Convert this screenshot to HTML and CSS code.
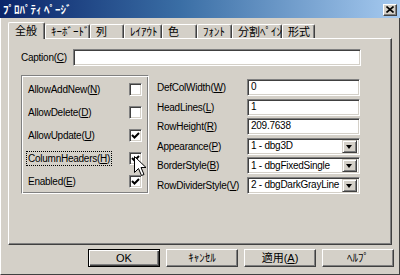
FILE: index.html
```html
<!DOCTYPE html>
<html lang="ja">

<head>
    <meta charset="UTF-8">
    <meta name="viewport" content="width=device-width, initial-scale=1.0">
    <title>プロパティページ</title>
    <link rel="stylesheet" href="styles.css">
</head>

<body>
    <div class="window">
        <div class="titlebar">
            <span class="title">ﾌﾟﾛﾊﾟﾃｨ ﾍﾟｰｼﾞ</span>
            <span class="close">
                <svg width="8" height="7" viewBox="0 0 8 7"><path d="M0.5 0.5 L7.5 6.5 M7.5 0.5 L0.5 6.5" stroke="#000" stroke-width="1.6"/></svg>
            </span>
        </div>

        <div class="tabs">
            <div class="tab active">全般</div>
            <div class="tab w45">ｷｰﾎﾞｰﾄﾞ</div>
            <div class="tab w34">列</div>
            <div class="tab w38">ﾚｲｱｳﾄ</div>
            <div class="tab w35">色</div>
            <div class="tab w35">ﾌｫﾝﾄ</div>
            <div class="tab w50">分割ﾍﾟｲﾝ</div>
            <div class="tab w33">形式</div>
        </div>

        <div class="panel">
            <div class="caption-row">
                <span class="caption-label">Caption(<u>C</u>)</span>
                <div class="textbox caption-box"></div>
            </div>

            <div class="columns">
                <div class="group">
                    <div class="check-row">
                        <span>AllowAddNew(<u>N</u>)</span>
                        <span class="checkbox"></span>
                    </div>
                    <div class="check-row">
                        <span>AllowDelete(<u>D</u>)</span>
                        <span class="checkbox"></span>
                    </div>
                    <div class="check-row">
                        <span>AllowUpdate(<u>U</u>)</span>
                        <span class="checkbox checked"><svg width="9" height="9" viewBox="0 0 9 9"><path d="M1 4 L3.5 6.5 L8 2" fill="none" stroke="#000" stroke-width="2"/></svg></span>
                    </div>
                    <div class="check-row">
                        <span class="focus">ColumnHeaders(<u>H</u>)</span>
                        <span class="checkbox checked"><svg width="9" height="9" viewBox="0 0 9 9"><path d="M1 4 L3.5 6.5 L8 2" fill="none" stroke="#000" stroke-width="2"/></svg></span>
                    </div>
                    <div class="check-row">
                        <span>Enabled(<u>E</u>)</span>
                        <span class="checkbox checked"><svg width="9" height="9" viewBox="0 0 9 9"><path d="M1 4 L3.5 6.5 L8 2" fill="none" stroke="#000" stroke-width="2"/></svg></span>
                    </div>
                </div>

                <div class="fields">
                    <div class="field">
                        <span class="field-label">DefColWidth(<u>W</u>)</span>
                        <div class="textbox">0</div>
                    </div>
                    <div class="field">
                        <span class="field-label">HeadLines(<u>L</u>)</span>
                        <div class="textbox">1</div>
                    </div>
                    <div class="field">
                        <span class="field-label">RowHeight(<u>R</u>)</span>
                        <div class="textbox">209.7638</div>
                    </div>
                    <div class="field">
                        <span class="field-label">Appearance(<u>P</u>)</span>
                        <div class="textbox select"><span>1 - dbg3D</span><span class="drop"></span></div>
                    </div>
                    <div class="field">
                        <span class="field-label">BorderStyle(<u>B</u>)</span>
                        <div class="textbox select"><span>1 - dbgFixedSingle</span><span class="drop"></span></div>
                    </div>
                    <div class="field">
                        <span class="field-label">RowDividerStyle(<u>V</u>)</span>
                        <div class="textbox select"><span>2 - dbgDarkGrayLine</span><span class="drop"></span></div>
                    </div>
                </div>
            </div>
        </div>

        <div class="buttons">
            <div class="btn default"><span>OK</span></div>
            <div class="btn"><span>ｷｬﾝｾﾙ</span></div>
            <div class="btn"><span>適用(<u>A</u>)</span></div>
            <div class="btn"><span>ﾍﾙﾌﾟ</span></div>
        </div>

        <svg class="cursor" width="13" height="21" viewBox="0 0 13 21">
            <path d="M0.5 0.5 L0.5 16.5 L4.5 12.5 L7.5 19.5 L10 18.5 L7 11.5 L12 11.5 Z" fill="#fff" stroke="#000" stroke-width="1"/>
        </svg>
    </div>
</body>

</html>
```

FILE: styles.css
```css
* {
    box-sizing: border-box;
}

body {
    margin: 0px;
    padding: 0px;
    width: 400px;
    height: 275px;
    overflow: hidden;
    font-family: "Liberation Sans", "Noto Sans CJK JP", sans-serif;
    font-size: 10px;
    letter-spacing: -0.25px;
    color: #000;
}

u {
    text-decoration: underline;
    text-underline-offset: 1px;
}

.window {
    position: relative;
    width: 400px;
    height: 275px;
    background-color: #d4d0c8;
    border-left: 1px solid #fff;
    border-right: 1px solid #404040;
    border-bottom: 1px solid #404040;
}

.titlebar {
    height: 18px;
    margin-left: -1px;
    margin-right: -1px;
    background: linear-gradient(to right, #0a246a 0%, #3a6ea5 45%, #a6caf0 100%);
    display: flex;
    align-items: center;
    justify-content: space-between;
    padding: 0px 3px 0px 3px;
}

.title {
    color: #fff;
    font-weight: bold;
    font-size: 11px;
    letter-spacing: 0px;
    line-height: 18px;
    font-family: "Noto Sans CJK JP", sans-serif;
}

.close {
    width: 14px;
    height: 12px;
    background-color: #d4d0c8;
    border: 1px solid;
    border-color: #fff #404040 #404040 #fff;
    box-shadow: inset -1px -1px #808080;
    display: flex;
    justify-content: center;
    align-items: center;
    margin-top: 1px;
}

.tabs {
    display: flex;
    align-items: flex-end;
    height: 20px;
    padding-left: 7px;
    position: relative;
    z-index: 1;
}

.tab {
    height: 14px;
    padding: 0px 5px;
    min-width: 33px;
    border: 1px solid;
    border-color: #fff #404040 transparent #fff;
    box-shadow: inset -1px 0 #808080;
    border-bottom: none;
    border-radius: 2px 2px 0 0;
    line-height: 13px;
    white-space: nowrap;
    font-size: 11px;
    letter-spacing: 0px;
    font-family: "Noto Sans CJK JP", sans-serif;
}

.tab.active {
    height: 17px;
    width: 37px;
    margin-bottom: -1px;
    background-color: #d4d0c8;
    line-height: 15px;
    padding-left: 6px;
}

.w45 { width: 45px; }
.w34 { width: 34px; }
.w38 { width: 38px; }
.w35 { width: 35px; }
.w50 { width: 50px; }
.w33 { width: 33px; }

.panel {
    height: 207px;
    margin: 0px 7px;
    border: 1px solid;
    border-color: #fff #404040 #404040 #fff;
    box-shadow: inset -1px -1px #808080;
    padding: 10px 0px 0px 12px;
}

.caption-row {
    display: flex;
    align-items: center;
    height: 17px;
}

.caption-label {
    width: 52px;
}

.textbox {
    height: 17px;
    background-color: #fff;
    border: 1px solid;
    border-color: #808080 #fff #fff #808080;
    box-shadow: inset 1px 1px #404040, inset -1px -1px #d4d0c8;
    padding-left: 3px;
    line-height: 14px;
    white-space: nowrap;
}

.caption-box {
    width: 288px;
}

.columns {
    display: flex;
    margin-top: 9px;
}

.group {
    width: 128px;
    height: 119px;
    border: 1px solid;
    border-color: #808080 #fff #fff #808080;
    box-shadow: inset 1px 1px #fff, inset -1px -1px #808080;
    padding: 2px 6px 0px 6px;
}

.check-row {
    height: 23px;
    display: flex;
    align-items: center;
    justify-content: space-between;
}

.focus {
    outline: 1px dotted #000;
    outline-offset: 1px;
}

.checkbox {
    width: 13px;
    height: 13px;
    background-color: #fff;
    border: 1px solid;
    border-color: #808080 #fff #fff #808080;
    box-shadow: inset 1px 1px #404040, inset -1px -1px #d4d0c8;
    display: flex;
    justify-content: center;
    align-items: center;
}

.fields {
    margin-left: 8px;
    margin-top: 4px;
    display: flex;
    flex-direction: column;
    gap: 2.6px;
}

.field {
    display: flex;
    align-items: center;
    height: 17px;
}

.field-label {
    width: 90px;
    white-space: nowrap;
}

.field .textbox {
    width: 113px;
}

.select {
    display: flex;
    justify-content: space-between;
    align-items: center;
    padding-right: 2px;
}

.drop {
    width: 15px;
    height: 13px;
    background-color: #d4d0c8;
    border: 1px solid;
    border-color: #d4d0c8 #404040 #404040 #d4d0c8;
    box-shadow: inset 1px 1px #fff, inset -1px -1px #808080;
    position: relative;
}

.drop::after {
    content: "";
    position: absolute;
    left: 3px;
    top: 4px;
    border-left: 3.5px solid transparent;
    border-right: 3.5px solid transparent;
    border-top: 4px solid #000;
}

.buttons {
    display: flex;
    justify-content: flex-end;
    gap: 6px;
    padding-right: 5px;
    margin-top: 4px;
}

.btn {
    width: 72px;
    height: 18px;
    border: 1px solid;
    border-color: #fff #404040 #404040 #fff;
    box-shadow: inset -1px -1px #808080;
    display: flex;
    justify-content: center;
    align-items: center;
    line-height: 14px;
    font-size: 11px;
    letter-spacing: 0px;
}

.btn.default {
    border: 1px solid #000;
    box-shadow: inset 1px 1px #fff, inset -1px -1px #404040, inset -2px -2px #808080;
    width: 72px;
}

.cursor {
    position: absolute;
    left: 133px;
    top: 156px;
}
```
